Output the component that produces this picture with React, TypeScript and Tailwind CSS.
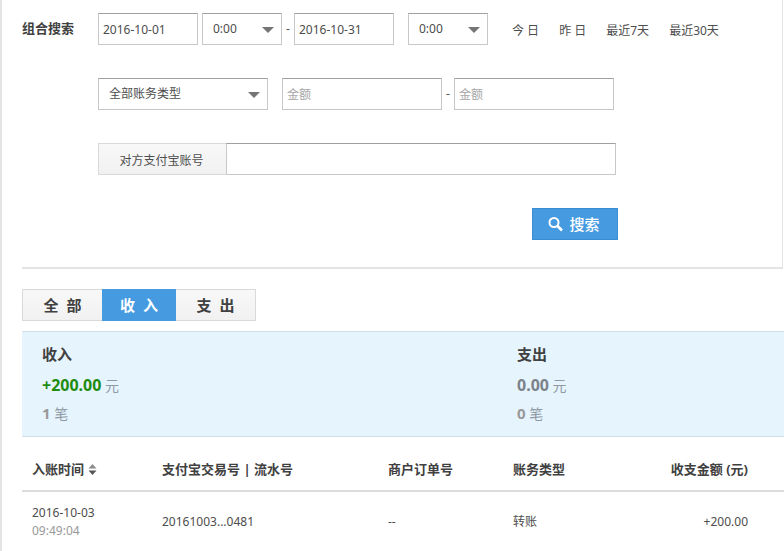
import React, { useState } from 'react';

interface SummaryProps {
  title: string;
  amount: string;
  amountClass: string;
  count: number;
}

interface SelectBoxProps {
  label: string;
  options: string[];
  className: string;
}

interface Bill {
  date: string;
  time: string;
  tradeNo: string;
  orderNo: string;
  type: string;
  amount: string;
}

const HOURS = ['0:00', '6:00', '12:00', '18:00'];
const TYPES = ['全部账务类型', '转账', '收费', '提现'];
const QUICK_RANGES = ['今 日', '昨 日', '最近7天', '最近30天'];
const TABS = [['全', '部'], ['收', '入'], ['支', '出']];

const BILLS: Bill[] = [
  { date: '2016-10-03', time: '09:49:04', tradeNo: '20161003...0481', orderNo: '--', type: '转账', amount: '+200.00' },
];

const INPUT = 'h-8 border border-[#c8c8c8] border-t-[#a0a0a0] bg-white px-1 outline-none placeholder:text-[#a6a6a6]';

const SelectBox: React.FC<SelectBoxProps> = ({ label, options, className }) => (
  <div className={`relative shrink-0 ${className}`}>
    <select
      aria-label={label}
      className="block h-8 w-full appearance-none border border-[#c8c8c8] border-t-[#a0a0a0] bg-white pl-2.5 pr-6 outline-none"
    >
      {options.map(o => <option key={o}>{o}</option>)}
    </select>
    <svg className="pointer-events-none absolute right-2 top-3.5" width="12" height="6" viewBox="0 0 12 6">
      <path d="M0 0H12L6 6Z" fill="#757575" />
    </svg>
  </div>
);

const Summary: React.FC<SummaryProps> = ({ title, amount, amountClass, count }) => (
  <div className="pl-5">
    <h3 className="text-[15px] font-bold leading-7 text-[#404040]">{title}</h3>
    <p className="mt-1 text-sm leading-7 text-[#8f99a3]">
      <b className={`text-base leading-none ${amountClass}`}>{amount}</b> 元
    </p>
    <p className="text-sm leading-7 text-[#8f99a3]">
      <b className="text-[15px] leading-none text-[#999]">{count}</b> 笔
    </p>
  </div>
);

export default function App() {
  const [tab, setTab] = useState(1);

  return (
    <div className="min-h-screen border-l-2 border-[#e4e4e4] bg-white pl-5 font-['Noto_Sans','Noto_Sans_CJK_SC',sans-serif] text-xs text-[#4d4d4d]">
      <form
        onSubmit={(e) => e.preventDefault()}
        className="mr-px flex flex-col gap-[33px] border-b-2 border-r border-[#e4e4e4] pb-[27px] pt-[13px]"
      >
        <div className="flex items-center">
          <h2 className="w-[76px] shrink-0 text-[13px] font-bold text-[#404040]">组合搜索</h2>
          <input aria-label="开始日期" defaultValue="2016-10-01" className={`${INPUT} w-[100px]`} />
          <SelectBox label="开始时间" options={HOURS} className="ml-1 w-20" />
          <span className="w-3 text-center">-</span>
          <input aria-label="结束日期" defaultValue="2016-10-31" className={`${INPUT} w-[100px]`} />
          <SelectBox label="结束时间" options={HOURS} className="ml-3.5 w-20" />
          <div className="ml-6 flex gap-5 whitespace-nowrap pt-1">
            {QUICK_RANGES.map(r => (
              <a key={r} href="#" className="hover:underline">{r}</a>
            ))}
          </div>
        </div>

        <div className="flex items-center pl-[76px]">
          <SelectBox label="账务类型" options={TYPES} className="w-[170px]" />
          <input aria-label="最低金额" placeholder="金额" className={`${INPUT} ml-3.5 w-40`} />
          <span className="w-3 text-center">-</span>
          <input aria-label="最高金额" placeholder="金额" className={`${INPUT} w-40`} />
        </div>

        <div className="flex pl-[76px]">
          <label
            htmlFor="account"
            className="flex h-8 w-32 items-center justify-center border border-r-0 border-[#d9d9d9] bg-linear-to-b from-[#f8f8f8] to-[#f1f1f1] pr-0.5 pt-1"
          >
            对方支付宝账号
          </label>
          <input id="account" className={`${INPUT} w-[390px]`} />
        </div>

        <div className="flex w-[596px] justify-end">
          <button
            type="submit"
            className="flex h-8 w-[86px] items-center justify-center gap-1.5 border border-[#3a8dd0] bg-[#459ae0] pr-0.5 text-[15px] font-medium text-white"
          >
            <svg width="15" height="15" viewBox="0 0 15 15" fill="none" stroke="currentColor">
              <circle cx="6" cy="5.5" r="4.5" strokeWidth="2" />
              <path d="M9.5 9L14 13.5" strokeWidth="2.6" />
            </svg>
            搜索
          </button>
        </div>
      </form>

      <div className="mt-5 flex text-[15px] font-bold text-[#404040]">
        {TABS.map(([first, second], i) => (
          <button
            key={first}
            type="button"
            onClick={() => setTab(i)}
            className={`flex h-8 items-center justify-center gap-2 border ${i === 1 ? 'w-[74px]' : 'w-20'} ${
              tab === i
                ? 'border-[#459ae0] bg-[#459ae0] text-white'
                : 'border-[#d9d9d9] bg-linear-to-b from-[#f8f8f8] to-[#f1f1f1] first:border-r-0 last:border-l-0'
            }`}
          >
            <span>{first}</span>
            <span>{second}</span>
          </button>
        ))}
      </div>

      <section className="mt-2.5 grid grid-cols-[475px_1fr] border-y border-[#d3dfe8] bg-[#e6f4fe] py-2">
        <Summary title="收入" amount="+200.00" amountClass="text-[#1f8c10]" count={1} />
        <Summary title="支出" amount="0.00" amountClass="text-[#7b828a]" count={0} />
      </section>

      <table className="mt-3 w-full table-fixed text-left">
        <thead className="text-[13px] text-[#404040]">
          <tr className="h-[42px] border-b-2 border-[#dcdcdc]">
            <th className="w-[130px] pl-2.5">
              <button type="button" className="flex items-center gap-1 font-bold">
                入账时间
                <svg width="9" height="11" viewBox="0 0 9 11">
                  <path d="M4.5 0L8.5 4.5H0.5Z" fill="#8c8c8c" />
                  <path d="M4.5 11L8.5 6.5H0.5Z" fill="#555" />
                </svg>
              </button>
            </th>
            <th className="w-[226px] pl-2.5">支付宝交易号 | 流水号</th>
            <th className="w-[125px] pl-2.5">商户订单号</th>
            <th className="pl-2.5">账务类型</th>
            <th className="pr-9 text-right">收支金额 (元)</th>
          </tr>
        </thead>
        <tbody>
          {BILLS.map(b => (
            <tr key={b.tradeNo} className="h-[60px]">
              <td className="pl-2.5 leading-[18px]">
                {b.date}
                <div className="text-[#999]">{b.time}</div>
              </td>
              <td className="pl-2.5">{b.tradeNo}</td>
              <td className="pl-2.5">{b.orderNo}</td>
              <td className="pl-2.5">{b.type}</td>
              <td className="pr-9 text-right">{b.amount}</td>
            </tr>
          ))}
        </tbody>
      </table>
    </div>
  );
}
